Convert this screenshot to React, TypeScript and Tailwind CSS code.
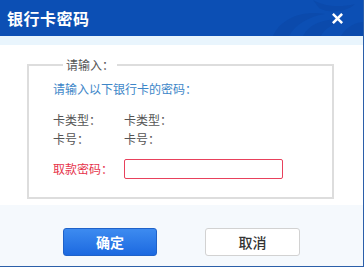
import React from "react";

export default function App() {
  const font = { fontFamily: '"Noto Sans CJK SC", "Noto Sans", sans-serif' };
  return (
    <div className="w-[364px] h-[269px] bg-white" style={font}>
      <div className="w-[364px] h-[267px] flex flex-col border-r border-b border-[#2b5fa9] bg-white">
        {/* title bar */}
        <div className="relative h-[36px] bg-[#0c4fb4] flex items-center justify-between pl-[7px] pr-[20px] overflow-hidden">
          <svg className="absolute right-0 top-0" width="100" height="36" viewBox="0 0 100 36">
            <path d="M10 36 C 18 18, 40 10, 62 14 C 48 16, 32 24, 26 36 Z" fill="#0b4aac" />
            <path d="M40 36 C 46 24, 62 18, 80 20 C 70 24, 60 30, 58 36 Z" fill="#0b4aac" />
            <path d="M50 0 C 60 6, 76 8, 92 4 C 84 12, 66 14, 56 8 Z" fill="#0b4aac" />
            <path d="M78 36 C 84 26, 94 22, 100 22 L100 36 Z" fill="#0b4aac" />
          </svg>
          <span className="relative text-white text-[16px] font-bold leading-none tracking-[0.5px]">银行卡密码</span>
          <svg className="relative" width="11" height="11" viewBox="0 0 11 11">
            <path d="M1.8 1.8 L9.2 9.2 M9.2 1.8 L1.8 9.2" stroke="white" strokeWidth="2.6" strokeLinecap="square" />
          </svg>
        </div>
        <div className="h-[9px] bg-[#e9f5fd]" />
        {/* body */}
        <div className="h-[160px] bg-white pl-[27px] pr-[29px] pt-[12px]">
          <fieldset className="border-2 border-[#dddddd] pl-[24px] pb-[18px] text-[12px]">
            <legend className="ml-[10px] px-[3px] leading-[16px] text-[#555555]">请输入：</legend>
            <div className="pt-[8px] leading-[16px] text-[#3d86c8]">请输入以下银行卡的密码：</div>
            <div className="mt-[15px] flex leading-[16px] text-[#555555]">
              <span className="w-[71px]">卡类型：</span>
              <span>卡类型：</span>
            </div>
            <div className="mt-[3px] flex leading-[16px] text-[#555555]">
              <span className="w-[71px]">卡号：</span>
              <span>卡号：</span>
            </div>
            <div className="mt-[12px] flex items-center">
              <span className="w-[71px] leading-[16px] text-[#e6334b]">取款密码：</span>
              <div className="w-[159px] h-[20px] border border-[#e8415c] rounded-[2px] bg-white" />
            </div>
          </fieldset>
        </div>
        {/* footer */}
        <div className="flex-1 bg-[#f5f9fd] flex justify-start pl-[63px] pt-[23px] gap-[48px]">
          <button className="w-[94px] h-[28px] rounded-[3px] border border-[#1f62c9] bg-gradient-to-b from-[#3d8bf0] to-[#1c69e0] text-white text-[14px] font-bold leading-none">
            确定
          </button>
          <button className="w-[95px] h-[28px] rounded-[3px] border border-[#d2d2d2] bg-white text-[#333333] text-[14px] font-medium leading-none">
            取消
          </button>
        </div>
      </div>
    </div>
  );
}
